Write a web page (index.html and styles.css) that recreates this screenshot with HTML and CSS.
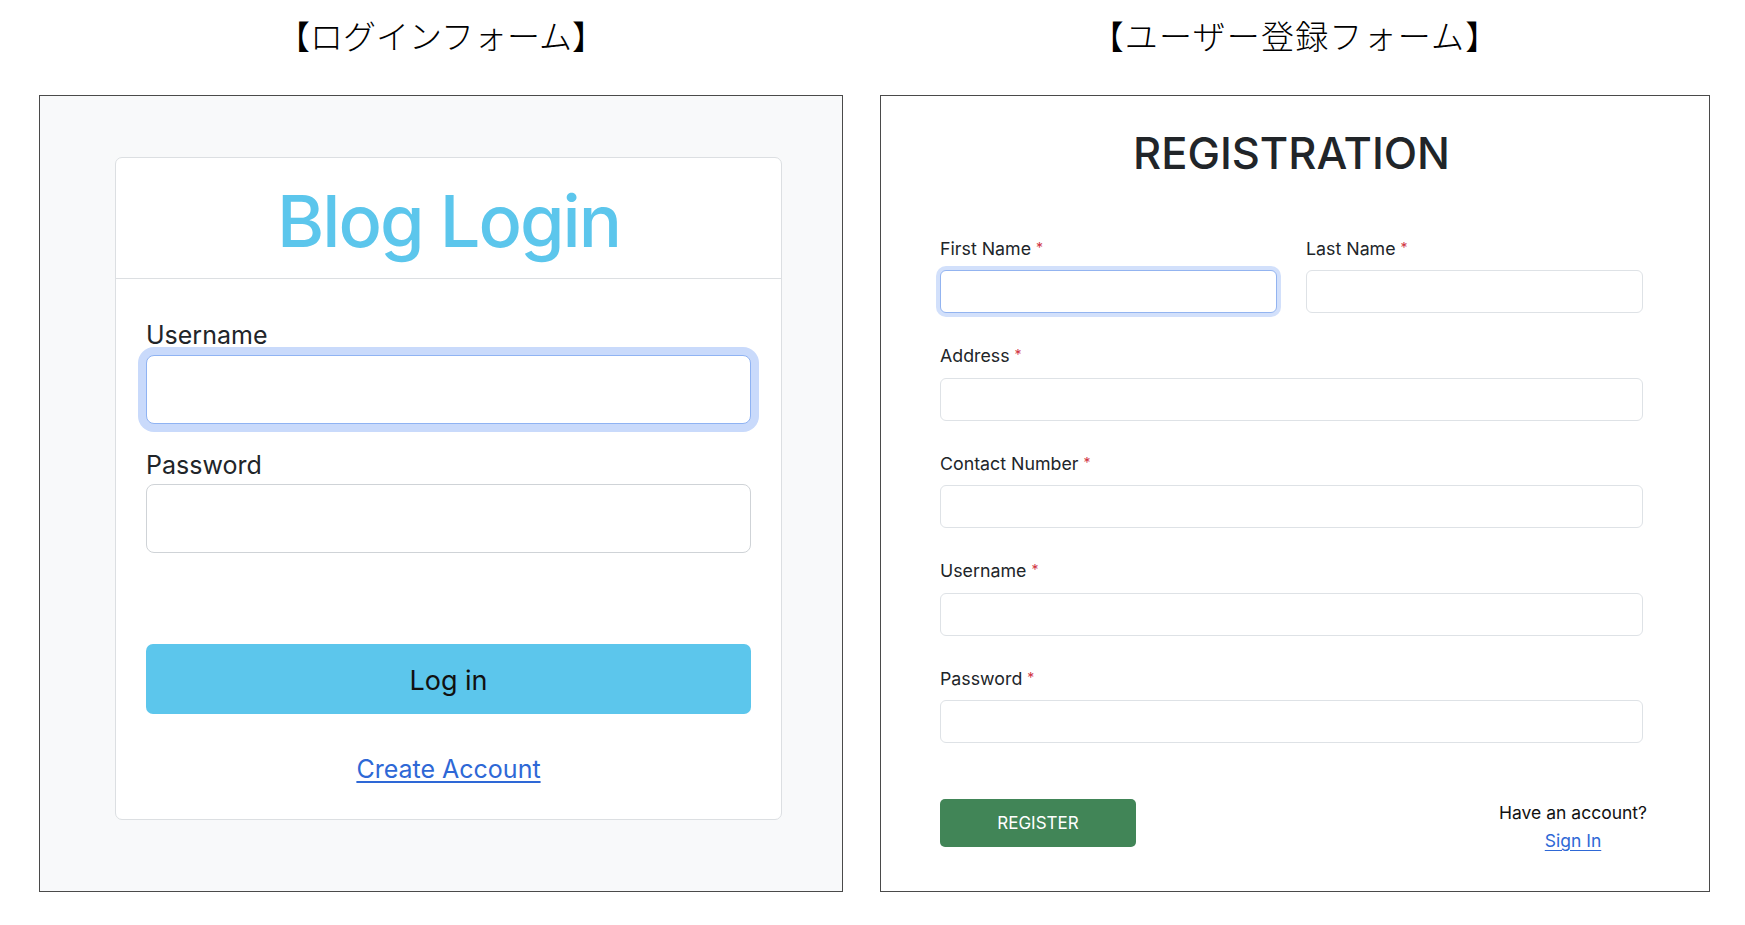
FILE: index.html
```html
<!DOCTYPE html>
<html lang="ja">
<head>
<meta charset="utf-8">
<title>Forms</title>
<link rel="stylesheet" href="styles.css">
</head>
<body>
<div class="page">
  <section class="column column-login">
    <h2 class="section-title title-login">【ログインフォーム】</h2>
    <div class="panel panel-login">
      <div class="login-card">
        <div class="login-header">
          <h1 class="login-title">Blog Login</h1>
        </div>
        <form class="login-body">
          <label class="login-label" for="login-user">Username</label>
          <input class="login-input is-focused" id="login-user" type="text">
          <label class="login-label login-label-pw" for="login-pass">Password</label>
          <input class="login-input login-input-pw" id="login-pass" type="password">
          <button class="login-btn" type="button">Log in</button>
          <a class="login-link" href="#">Create Account</a>
        </form>
      </div>
    </div>
  </section>

  <section class="column column-register">
    <h2 class="section-title title-register">【ユーザー登録フォーム】</h2>
    <div class="panel panel-register">
      <form class="reg-form">
        <h1 class="reg-title">REGISTRATION</h1>
        <div class="reg-row">
          <div class="reg-field">
            <label class="reg-label">First Name <span class="req">*</span></label>
            <input class="reg-input is-focused" type="text">
          </div>
          <div class="reg-field">
            <label class="reg-label">Last Name <span class="req">*</span></label>
            <input class="reg-input" type="text">
          </div>
        </div>
        <div class="reg-field">
          <label class="reg-label">Address <span class="req">*</span></label>
          <input class="reg-input" type="text">
        </div>
        <div class="reg-field">
          <label class="reg-label">Contact Number <span class="req">*</span></label>
          <input class="reg-input" type="text">
        </div>
        <div class="reg-field">
          <label class="reg-label">Username <span class="req">*</span></label>
          <input class="reg-input" type="text">
        </div>
        <div class="reg-field">
          <label class="reg-label">Password <span class="req">*</span></label>
          <input class="reg-input" type="password">
        </div>
        <div class="reg-footer">
          <button class="reg-btn" type="button">REGISTER</button>
          <div class="reg-signin">
            <p class="reg-signin-text">Have an account?</p>
            <a class="reg-signin-link" href="#">Sign In</a>
          </div>
        </div>
      </form>
    </div>
  </section>
</div>
</body>
</html>
```

FILE: styles.css
```css
* {
  box-sizing: border-box;
}

html, body {
  margin: 0;
  padding: 0;
  background: #ffffff;
}

body {
  font-family: Inter, "Noto Sans", "Noto Sans CJK JP", sans-serif;
  color: #212529;
}

.page {
  display: flex;
  gap: 37px;
  padding-left: 39px;
}

.column {
  display: flex;
  flex-direction: column;
}

.column-login {
  width: 804px;
}

.column-register {
  width: 830px;
}

.section-title {
  margin: 0 0 25px;
  height: 70px;
  line-height: 70px;
  text-align: center;
  font-family: "Noto Sans CJK JP", sans-serif;
  font-weight: 300;
  font-size: 33px;
  color: #000;
}

.title-login {
  letter-spacing: 0;
}

.title-register {
  letter-spacing: 1.2px;
}

.panel {
  height: 797px;
  border: 1px solid #4a4a4a;
}

.panel-login {
  background: #f8f9fa;
}

.panel-register {
  background: #ffffff;
}

/* ---------- Login card ---------- */

.login-card {
  width: 667px;
  margin: 61px 0 0 75px;
  background: #fff;
  border: 1px solid #dcdfe2;
  border-radius: 7px;
}

.login-header {
  padding: 20px 0 14px;
  border-bottom: 1px solid #dcdfe2;
  text-align: center;
}

.login-title {
  margin: 0;
  font-size: 72px;
  line-height: 86px;
  font-weight: 500;
  letter-spacing: -2px;
  color: #5cc6ec;
}

.login-body {
  display: flex;
  flex-direction: column;
  padding: 42px 30px 35px;
}

.login-label {
  font-size: 25px;
  line-height: 28.8px;
  color: #212529;
}

.login-input {
  display: block;
  width: 100%;
  height: 69px;
  margin-top: 5px;
  border: 1px solid #cfd3d7;
  border-radius: 8px;
  background: #fff;
  outline: none;
}

.login-input.is-focused {
  border-color: #8fb3f3;
  box-shadow: 0 0 0 8px #c9dafb;
}

.login-label-pw {
  margin-top: 27px;
}

.login-input-pw {
  margin-top: 4px;
}

.login-btn {
  height: 70px;
  margin-top: 91px;
  padding-top: 4px;
  border: none;
  border-radius: 7px;
  background: #5cc6ec;
  color: #111;
  font-family: Inter, sans-serif;
  font-size: 27px;
}

.login-link {
  align-self: center;
  margin-top: 40px;
  font-size: 25px;
  line-height: 30px;
  color: #2e68d6;
  text-decoration: underline;
  text-underline-offset: 3px;
  text-decoration-thickness: 1.5px;
}

/* ---------- Registration ---------- */

.reg-form {
  width: 703px;
  margin-left: 59px;
  padding-top: 32px;
  display: flex;
  flex-direction: column;
}

.reg-title {
  margin: 0 0 60px;
  text-align: center;
  font-size: 43.5px;
  line-height: 50px;
  font-weight: 500;
  color: #212529;
  letter-spacing: 0;
}

.reg-row {
  display: grid;
  grid-template-columns: 1fr 1fr;
  gap: 29px;
}

.reg-field {
  display: flex;
  flex-direction: column;
  margin-bottom: 32px;
}

.reg-label {
  font-size: 17.8px;
  line-height: 20.4px;
  color: #212529;
}

.req {
  color: #d0343f;
  font-size: 14px;
  vertical-align: 2px;
}

.reg-input {
  display: block;
  width: 100%;
  height: 43px;
  margin-top: 11px;
  border: 1px solid #dee2e6;
  border-radius: 6px;
  background: #fff;
  outline: none;
}

.reg-input.is-focused {
  border-color: #93b4f0;
  box-shadow: 0 0 0 4px #d2e0fb;
}

.reg-footer {
  display: flex;
  justify-content: space-between;
  align-items: flex-start;
  margin-top: 24px;
}

.reg-btn {
  width: 196px;
  height: 48px;
  border: none;
  border-radius: 5px;
  background: #418557;
  color: #fff;
  font-family: Inter, sans-serif;
  font-size: 17px;
}

.reg-signin {
  margin-top: 0;
  margin-right: -4px;
  display: flex;
  flex-direction: column;
  align-items: center;
  font-size: 17.5px;
  line-height: 28px;
}

.reg-signin-text {
  margin: 0;
  color: #111;
}

.reg-signin-link {
  color: #2e68d6;
  text-decoration: underline;
  text-underline-offset: 3px;
}
```
